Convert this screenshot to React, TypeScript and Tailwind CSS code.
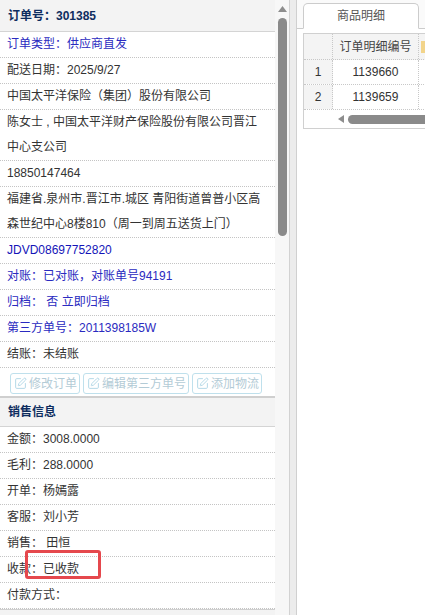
import React from "react";
import { SquarePen } from "lucide-react";

const font = { fontFamily: '"Liberation Sans", "Noto Sans CJK SC", sans-serif' };

function Row({ children, blue, deep }: { children: React.ReactNode; blue?: boolean; deep?: boolean }) {
  return (
    <div
      className={
        "px-[7px] text-[12px] leading-[25px] border-b border-dotted border-[#c4c4c4] whitespace-nowrap " +
        (deep ? "text-[#1414b8]" : blue ? "text-[#2a2ac0]" : "text-[#333333]")
      }
    >
      {children}
    </div>
  );
}

function Btn({ label, w }: { label: string; w: string }) {
  return (
    <div
      className={
        "h-[21px] flex items-center gap-[2px] pl-[3px] border border-[#bfe0ec] rounded-[3px] text-[12px] text-[#b3cbd6] bg-white " +
        w
      }
    >
      <SquarePen size={13} strokeWidth={1.6} color="#a9d3e3" />
      <span>{label}</span>
    </div>
  );
}

function Header({ children, top }: { children: React.ReactNode; top?: boolean }) {
  return (
    <div
      className={
        "h-[31px] flex items-center px-[8px] bg-[#f3f3f3] border-b border-[#d4d4d4] text-[12px] font-bold text-[#0e2d5f] " +
        (top ? "border-t-2 border-t-[#cfcfcf]" : "")
      }
    >
      {children}
    </div>
  );
}

export default function App() {
  return (
    <div className="flex w-[425px] h-[615px] overflow-hidden bg-white" style={font}>
      {/* Left panel */}
      <div className="flex w-[289px] h-full shrink-0">
        <div className="w-[275px] shrink-0 relative">
          <div className="h-[32px] flex items-center px-[8px] bg-[#f3f3f3] border-b border-[#d4d4d4] text-[12px] font-bold text-[#0e2d5f]">
            订单号：301385
          </div>
          <Row blue>订单类型：供应商直发</Row>
          <Row>配送日期：2025/9/27</Row>
          <Row>中国太平洋保险（集团）股份有限公司</Row>
          <Row>
            <div>陈女士 , 中国太平洋财产保险股份有限公司晋江</div>
            <div>中心支公司</div>
          </Row>
          <Row>18850147464</Row>
          <Row>
            <div>福建省.泉州市.晋江市.城区 青阳街道曾普小区高</div>
            <div>森世纪中心8楼810（周一到周五送货上门）</div>
          </Row>
          <Row deep>JDVD08697752820</Row>
          <Row blue>对账：已对账，对账单号94191</Row>
          <Row blue>归档： 否 立即归档</Row>
          <Row blue>第三方单号：2011398185W</Row>
          <Row>结账：未结账</Row>
          <div className="h-[28px] flex items-start pt-[5px] pl-[10px] gap-[3px]">
            <Btn label="修改订单" w="w-[70px]" />
            <Btn label="编辑第三方单号" w="w-[106px]" />
            <Btn label="添加物流" w="w-[70px]" />
          </div>
          <Header top>销售信息</Header>
          <Row>金额：3008.0000</Row>
          <Row>毛利：288.0000</Row>
          <Row>开单：杨嫣露</Row>
          <Row>客服：刘小芳</Row>
          <Row>销售： 田恒</Row>
          <Row>收款：已收款</Row>
          <Row>付款方式：</Row>
          <div className="h-[20px] bg-[#f3f3f3] border-t border-[#cfcfcf]" />
          <div className="absolute left-[25px] top-[550px] w-[76px] h-[29px] border-[3px] border-[#e5484d] rounded-[3px]" />
        </div>
        <div className="w-[14px] h-full bg-[#f7f7f7] flex flex-col items-center">
          <svg width="9" height="6" viewBox="0 0 9 6" className="mt-[6px]">
            <path d="M4.5 0 L9 6 L0 6 Z" fill="#8d8d8d" />
          </svg>
          <div className="w-[9px] h-[218px] mt-[6px] rounded-full bg-[#8a8a8a]" />
        </div>
      </div>

      {/* Splitter */}
      <div className="w-[7px] h-full shrink-0 bg-[#ececec] border-l border-[#d2d2d2]" />

      {/* Right panel */}
      <div className="flex-1 min-w-0 h-full border-l border-[#d0d0d0] bg-white">
        <div className="h-[29px] flex items-end pl-[6px] border-b border-[#cccccc] bg-[#fafafa]">
          <div className="w-[116px] shrink-0 h-[26px] -mb-px bg-white border border-[#cccccc] border-b-white rounded-t-[5px] flex items-center justify-center text-[12px] text-[#555555]">
            商品明细
          </div>
        </div>
        <div className="mt-[4px] ml-[6px] w-[200px] border border-[#d0d0d0]">
          <div className="flex h-[26px] bg-[#f4f4f4] border-b border-dotted border-[#c8c8c8] text-[12px] text-[#444444]">
            <div className="w-[29px] shrink-0 border-r border-dotted border-[#c8c8c8]" />
            <div className="w-[86px] shrink-0 flex items-center justify-center border-r border-dotted border-[#c8c8c8]">
              订单明细编号
            </div>
            <div className="flex-1 flex items-center pl-[2px]">
              <div className="w-[4px] h-[12px] bg-[#f2d48a]" />
            </div>
          </div>
          {["1139660", "1139659"].map((v, i) => (
            <div key={v} className="flex h-[25px] border-b border-dotted border-[#c8c8c8] text-[12px] text-[#333333]">
              <div className="w-[29px] shrink-0 flex items-center justify-center bg-[#f4f4f4] border-r border-dotted border-[#c8c8c8]">
                {i + 1}
              </div>
              <div className="w-[86px] shrink-0 flex items-center justify-center border-r border-dotted border-[#c8c8c8]">
                {v}
              </div>
              <div className="flex-1" />
            </div>
          ))}
          <div className="h-[18px] flex items-center pl-[34px] gap-[4px]">
            <svg width="6" height="8" viewBox="0 0 6 8">
              <path d="M0 4 L6 0 L6 8 Z" fill="#8d8d8d" />
            </svg>
            <div className="flex-1 h-[9px] rounded-l-full bg-[#8a8a8a]" />
          </div>
        </div>
      </div>
    </div>
  );
}
